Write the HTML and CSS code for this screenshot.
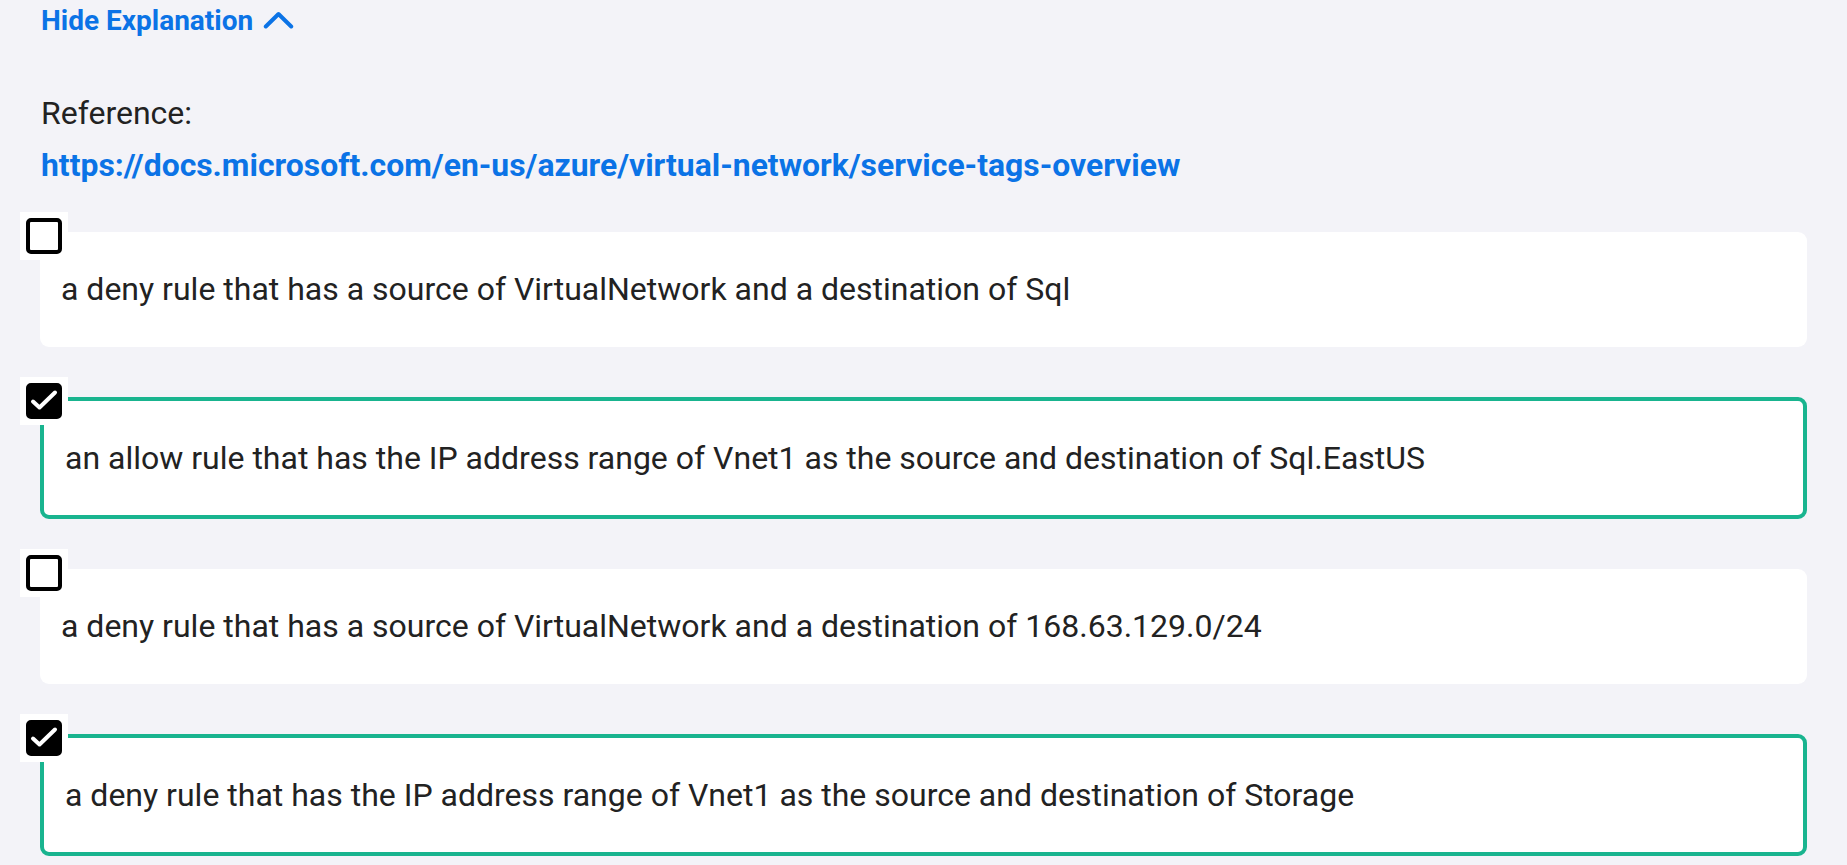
FILE: index.html
```html
<!DOCTYPE html>
<html lang="en">
<head>
<meta charset="utf-8">
<title>Explanation</title>
<link rel="stylesheet" href="styles.css">
</head>
<body>
<main class="page">
  <a class="toggle" href="#">
    <span>Hide Explanation</span>
    <svg class="chevron" width="31" height="18" viewBox="0 0 31 18" aria-hidden="true">
      <polyline points="2.8,15.5 15.5,3 28.2,15.5" fill="none" stroke="#0b73e6" stroke-width="4" stroke-linecap="round" stroke-linejoin="round"/>
    </svg>
  </a>
  <p class="ref-label">Reference:</p>
  <a class="ref-link" href="#">https://docs.microsoft.com/en-us/azure/virtual-network/service-tags-overview</a>

  <ul class="options">
    <li class="option">
      <span class="check"><span class="box"></span></span>
      <div class="card">a deny rule that has a source of VirtualNetwork and a destination of Sql</div>
    </li>
    <li class="option">
      <span class="check"><span class="box checked"><svg width="28" height="28" viewBox="0 0 28 28" aria-hidden="true"><polyline points="3,14.5 9.5,20.5 25,5.5" fill="none" stroke="#fff" stroke-width="4" stroke-linecap="round" stroke-linejoin="round"/></svg></span></span>
      <div class="card selected">an allow rule that has the IP address range of Vnet1 as the source and destination of Sql.EastUS</div>
    </li>
    <li class="option">
      <span class="check"><span class="box"></span></span>
      <div class="card">a deny rule that has a source of VirtualNetwork and a destination of 168.63.129.0/24</div>
    </li>
    <li class="option">
      <span class="check"><span class="box checked"><svg width="28" height="28" viewBox="0 0 28 28" aria-hidden="true"><polyline points="3,14.5 9.5,20.5 25,5.5" fill="none" stroke="#fff" stroke-width="4" stroke-linecap="round" stroke-linejoin="round"/></svg></span></span>
      <div class="card selected">a deny rule that has the IP address range of Vnet1 as the source and destination of Storage</div>
    </li>
  </ul>
</main>
</body>
</html>
```

FILE: styles.css
```css
html, body {
  margin: 0;
  padding: 0;
  background: #f3f3f8;
}

body {
  font-family: Roboto, "Noto Sans", "Liberation Sans", sans-serif;
  color: #222222;
}

.page {
  padding: 4px 40px 0 41px;
}

.toggle {
  display: inline-flex;
  align-items: center;
  gap: 10px;
  font-size: 28px;
  font-weight: 700;
  color: #0b73e6;
  text-decoration: none;
  line-height: 33px;
}

.chevron {
  display: block;
  margin-top: -2px;
}

.ref-label {
  margin: 58px 0 0;
  font-size: 32px;
  line-height: 37px;
  color: #222222;
}

.ref-link {
  display: block;
  margin-top: 15px;
  font-size: 31.9px;
  line-height: 37px;
  font-weight: 700;
  color: #0b73e6;
  text-decoration: none;
}

.options {
  list-style: none;
  margin: 48px 0 0 -41px;
  padding: 0;
  display: flex;
  flex-direction: column;
  gap: 50px;
}

.option {
  position: relative;
  padding-left: 40px;
}

.check {
  position: absolute;
  left: 20px;
  top: -20px;
  width: 48px;
  height: 48px;
  background: #ffffff;
  display: flex;
  align-items: center;
  justify-content: center;
}

.box {
  box-sizing: border-box;
  width: 36px;
  height: 36px;
  border: 4px solid #000000;
  border-radius: 5px;
  background: #ffffff;
  display: flex;
  align-items: center;
  justify-content: center;
}

.box.checked {
  background: #000000;
  border-color: #000000;
}

.box svg {
  display: block;
  flex: none;
}

.card {
  background: #ffffff;
  border-radius: 9px;
  padding: 39px 21px;
  font-size: 32px;
  line-height: 37px;
  color: #222222;
}

.card.selected {
  border: 4px solid #19b48f;
  padding: 39px 21px 38px;
}
```
